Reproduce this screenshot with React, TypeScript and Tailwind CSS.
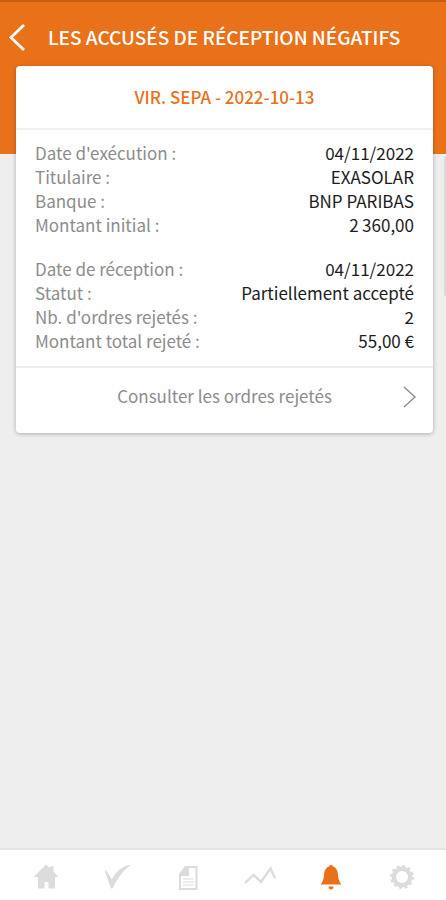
import type { ReactNode } from "react";

type Row = { label: string; value: string };

const execution: Row[] = [
  { label: "Date d'exécution :", value: "04/11/2022" },
  { label: "Titulaire :", value: "EXASOLAR" },
  { label: "Banque :", value: "BNP PARIBAS" },
  { label: "Montant initial :", value: "2\u2009360,00" },
];

const reception: Row[] = [
  { label: "Date de réception :", value: "04/11/2022" },
  { label: "Statut :", value: "Partiellement accepté" },
  { label: "Nb. d'ordres rejetés :", value: "2" },
  { label: "Montant total rejeté :", value: "55,00 €" },
];

function Details({ rows }: { rows: Row[] }) {
  return (
    <dl>
      {rows.map((row) => (
        <div key={row.label} className="flex justify-between">
          <dt className="text-[#8c8c8c]">{row.label}</dt>
          <dd className="text-[#1c1c1c]">{row.value}</dd>
        </div>
      ))}
    </dl>
  );
}

function NavItem({ label, active, children }: { label: string; active?: boolean; children: ReactNode }) {
  return (
    <button
      type="button"
      aria-label={label}
      aria-current={active ? "page" : undefined}
      className={`flex flex-1 items-center justify-center ${active ? "text-[#e9711a]" : "text-[#dcdcdc]"}`}
    >
      <svg viewBox="0 0 32 28" className="h-7 w-8" fill="currentColor" aria-hidden="true">
        {children}
      </svg>
    </button>
  );
}

export default function App() {
  return (
    <div className="relative flex min-h-screen flex-col bg-[#eeeeee] font-['Noto_Sans_CJK_JP','Noto_Sans',sans-serif] text-[17px] leading-6">
      <header className="h-[154px] border-t-2 border-[#c9600f] bg-[#e9711a] pt-[19px]">
        <div className="flex h-8 items-center pl-2">
          <button type="button" aria-label="Retour" className="text-white">
            <svg viewBox="0 0 20 32" className="h-8 w-5" fill="none" stroke="currentColor" strokeWidth="2.8" aria-hidden="true">
              <path d="M16 4 L3 16.5 L16 29" />
            </svg>
          </button>
          <h1 className="ml-5 text-[19px] font-medium whitespace-nowrap text-white">LES ACCUSÉS DE RÉCEPTION NÉGATIFS</h1>
        </div>
      </header>

      <main className="-mt-[88px] flex-1 pr-[13px] pl-4">
        <section className="rounded-[4px] bg-white shadow-[0_1px_4px_rgba(0,0,0,0.28)]">
          <h2 className="border-b-2 border-[#f1f1f1] py-[19px] text-center font-medium text-[#e9711a]">
            VIR. SEPA - 2022-10-13
          </h2>
          <div className="flex flex-col gap-5 border-b-2 border-[#eeeeee] pt-[11px] pr-[19px] pb-[13px] pl-[19px]">
            <Details rows={execution} />
            <Details rows={reception} />
          </div>
          <button type="button" className="flex w-full items-center px-4 pt-4 pb-[25px] text-[#8c8c8c]">
            <span className="flex-1 pl-4 text-center">Consulter les ordres rejetés</span>
            <svg viewBox="0 0 16 24" className="h-6 w-4" fill="none" stroke="currentColor" strokeWidth="1.4" aria-hidden="true">
              <path d="M3 3 L14 13 L3 23" />
            </svg>
          </button>
        </section>
      </main>

      <div className="absolute top-[156px] right-0 h-[140px] w-[2px] rounded-l-full bg-[#dcdcdc]" />

      <nav className="flex border-t-2 border-[#e4e4e4] bg-white pt-[13px] pr-2 pb-[9px] pl-[10px]">
        <NavItem label="Accueil">
          <path d="M16 1.5 L20 5 V3.5 H23.5 V8.5 L28.5 14 H25 V25.5 H18.5 V19 H14.5 V25.5 H8 V14 H3.5 Z" />
        </NavItem>
        <NavItem label="Validation">
          <path d="M3.5 7 Q7 8 10.5 16.5 Q18 3 30 1.5 Q18 11 11.5 25.5 H10 Q6.5 16 3.5 7 Z" />
        </NavItem>
        <NavItem label="Documents">
          <path
            fillRule="evenodd"
            d="M13 3 H25.5 V27 H7 V11 Z M17 5 V13 H9 V25 H23.5 V5 Z"
          />
          <path d="M11 15.5 H21.5 V16.5 H11 Z M11 18.5 H21.5 V19.5 H11 Z M11 21.5 H21.5 V22.5 H11 Z" />
        </NavItem>
        <NavItem label="Activité">
          <path d="M1 20 L9.5 12 L17 19 L26.5 5.5 L31 15.5" fill="none" stroke="currentColor" strokeWidth="2.4" />
        </NavItem>
        <NavItem label="Notifications" active>
          <path d="M16 2 Q18 2 18 3.5 Q22.7 5 23 12 Q23.3 18 26.5 21.5 H5.5 Q8.7 18 9 12 Q9.3 5 14 3.5 Q14 2 16 2 Z" />
          <path d="M13.5 23.5 H18.5 Q18.3 26.5 16 26.5 Q13.7 26.5 13.5 23.5 Z" />
        </NavItem>
        <NavItem label="Réglages">
          <circle cx="16" cy="14" r="8.2" fill="none" stroke="currentColor" strokeWidth="4.4" />
          <circle cx="16" cy="14" r="10.8" fill="none" stroke="currentColor" strokeWidth="2.4" strokeDasharray="2.827" />
        </NavItem>
      </nav>
    </div>
  );
}
